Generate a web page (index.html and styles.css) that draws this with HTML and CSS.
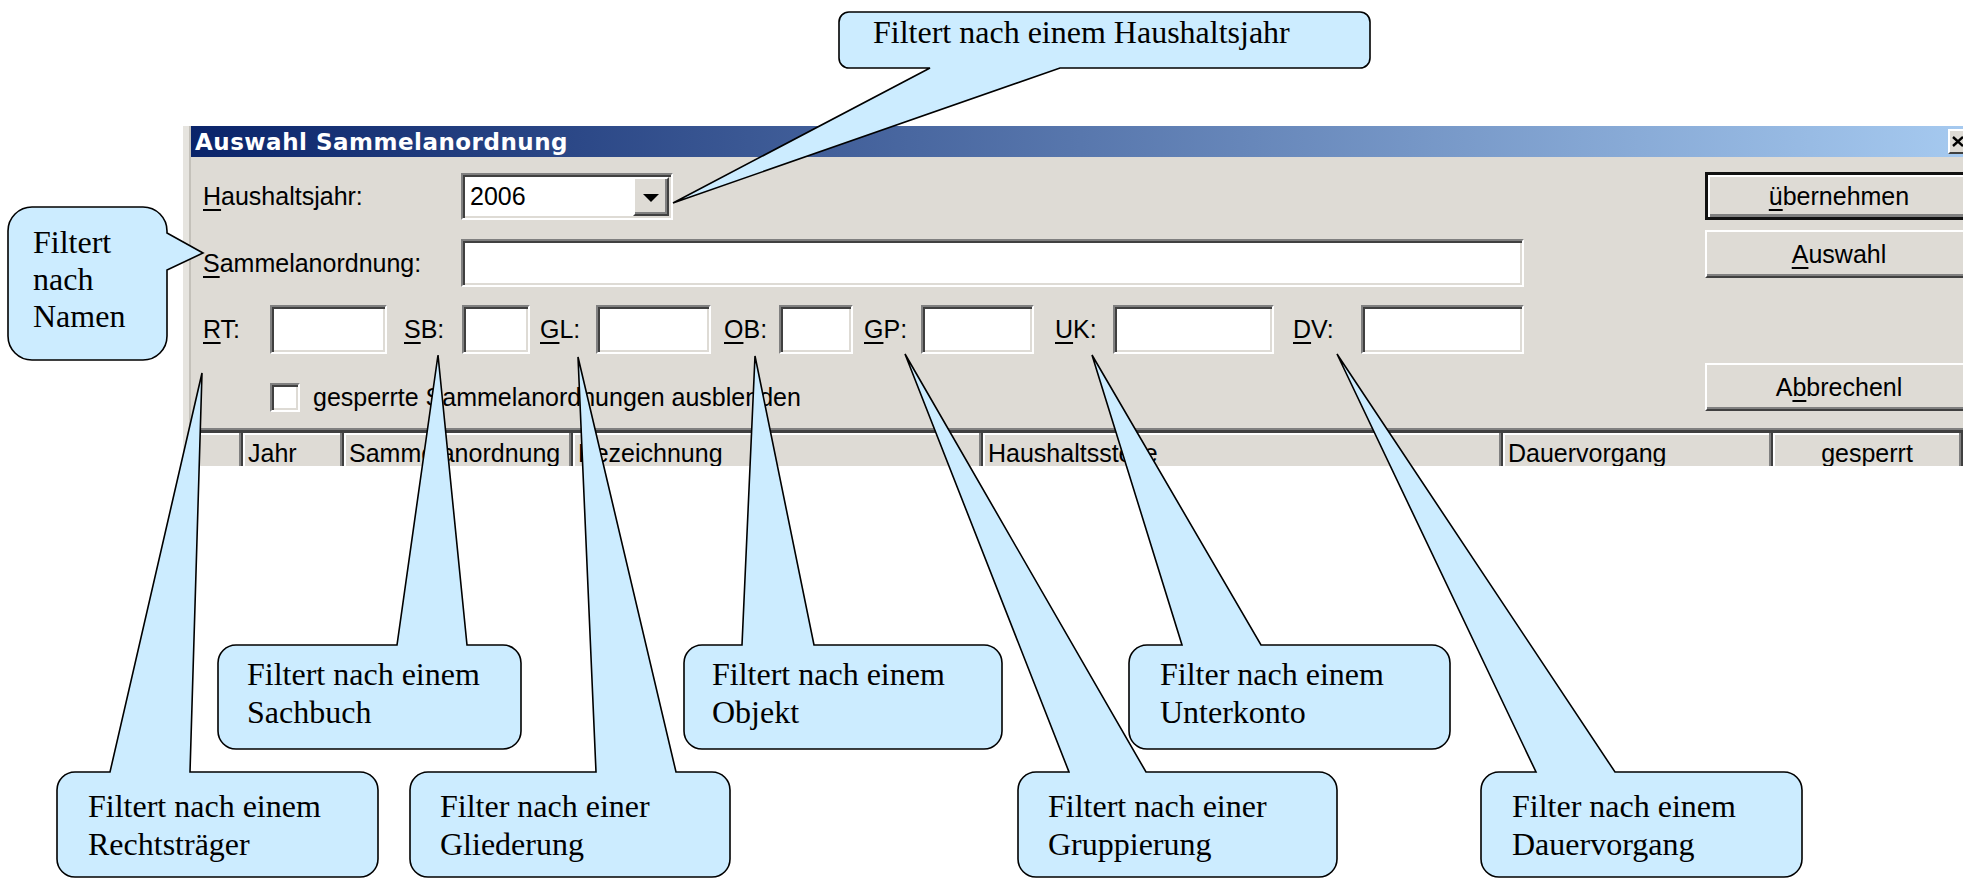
FILE: index.html
```html
<!DOCTYPE html>
<html lang="de">
<head>
    <meta charset="UTF-8">
    <title>Auswahl Sammelanordnung</title>
    <link rel="stylesheet" href="styles.css">
</head>
<body>

<div class="page">

    <div class="window">
        <div class="titlebar">
            <span class="title">Auswahl Sammelanordnung</span>
            <span class="close">
                <svg width="12" height="11" viewBox="0 0 12 11"><path d="M1 1L11 10M11 1L1 10" stroke="#000" stroke-width="2.4"/></svg>
            </span>
        </div>

        <div class="content">
            <div class="form">
                <div class="row row-year">
                    <label class="lbl lbl-wide"><u>H</u>aushaltsjahr:</label>
                    <div class="sunken combo">
                        <span class="combo-value">2006</span>
                        <span class="raised combo-btn"><span class="arrow"></span></span>
                    </div>
                </div>

                <div class="row row-name">
                    <label class="lbl lbl-wide"><u>S</u>ammelanordnung:</label>
                    <div class="sunken field-name"></div>
                </div>

                <div class="row row-filters">
                    <label class="lbl lbl-rt"><u>R</u>T:</label><div class="sunken in-rt"></div>
                    <label class="lbl lbl-sb"><u>S</u>B:</label><div class="sunken in-sb"></div>
                    <label class="lbl lbl-gl"><u>G</u>L:</label><div class="sunken in-gl"></div>
                    <label class="lbl lbl-ob"><u>O</u>B:</label><div class="sunken in-ob"></div>
                    <label class="lbl lbl-gp"><u>G</u>P:</label><div class="sunken in-gp"></div>
                    <label class="lbl lbl-uk"><u>U</u>K:</label><div class="sunken in-uk"></div>
                    <label class="lbl lbl-dv"><u>D</u>V:</label><div class="sunken in-dv"></div>
                </div>

                <div class="row row-check">
                    <span class="sunken checkbox"></span>
                    <span class="check-label">gesperrte Sammelanordnungen ausblenden</span>
                </div>
            </div>

            <div class="buttons">
                <button class="btn btn-default"><u>ü</u>bernehmen</button>
                <button class="btn btn-select"><u>A</u>uswahl</button>
                <button class="btn btn-cancel">A<u>b</u>brechenl</button>
            </div>
        </div>

        <div class="list">
            <div class="list-head">
                <div class="col"></div>
                <div class="col">Jahr</div>
                <div class="col">Sammelanordnung</div>
                <div class="col">Bezeichnung</div>
                <div class="col">Haushaltsstelle</div>
                <div class="col">Dauervorgang</div>
                <div class="col col-center">gesperrt</div>
                <div class="col"></div>
            </div>
        </div>
    </div>

    <!-- callouts drawn over the dialog -->
    <svg class="callouts" width="1963" height="879" viewBox="0 0 1963 879">
        <path class="callout" d="M849,12 H1360 A10,10 0 0 1 1370,22 V58 A10,10 0 0 1 1360,68 H1060 L673,203 L930,68 H849 A10,10 0 0 1 839,58 V22 A10,10 0 0 1 849,12 Z"/>
        <text class="callout-text" x="873" y="43">Filtert nach einem Haushaltsjahr</text>

        <path class="callout" d="M32,207 H143 A24,24 0 0 1 167,231 V233 L203,253 L167,270 V336 A24,24 0 0 1 143,360 H32 A24,24 0 0 1 8,336 V231 A24,24 0 0 1 32,207 Z"/>
        <text class="callout-text" x="33" y="253">Filtert</text>
        <text class="callout-text" x="33" y="290">nach</text>
        <text class="callout-text" x="33" y="327">Namen</text>

        <path class="callout" d="M236,645 H397 L438,355 L467,645 H503 A18,18 0 0 1 521,663 V731 A18,18 0 0 1 503,749 H236 A18,18 0 0 1 218,731 V663 A18,18 0 0 1 236,645 Z"/>
        <text class="callout-text" x="247" y="685">Filtert nach einem</text>
        <text class="callout-text" x="247" y="723">Sachbuch</text>

        <path class="callout" d="M702,645 H742 L755,356 L814,645 H984 A18,18 0 0 1 1002,663 V731 A18,18 0 0 1 984,749 H702 A18,18 0 0 1 684,731 V663 A18,18 0 0 1 702,645 Z"/>
        <text class="callout-text" x="712" y="685">Filtert nach einem</text>
        <text class="callout-text" x="712" y="723">Objekt</text>

        <path class="callout" d="M1147,645 H1182 L1092,355 L1261,645 H1432 A18,18 0 0 1 1450,663 V731 A18,18 0 0 1 1432,749 H1147 A18,18 0 0 1 1129,731 V663 A18,18 0 0 1 1147,645 Z"/>
        <text class="callout-text" x="1160" y="685">Filter nach einem</text>
        <text class="callout-text" x="1160" y="723">Unterkonto</text>

        <path class="callout" d="M75,772 H110 L202,373 L190,772 H360 A18,18 0 0 1 378,790 V859 A18,18 0 0 1 360,877 H75 A18,18 0 0 1 57,859 V790 A18,18 0 0 1 75,772 Z"/>
        <text class="callout-text" x="88" y="817">Filtert nach einem</text>
        <text class="callout-text" x="88" y="855">Rechtsträger</text>

        <path class="callout" d="M428,772 H596 L578,357 L676,772 H712 A18,18 0 0 1 730,790 V859 A18,18 0 0 1 712,877 H428 A18,18 0 0 1 410,859 V790 A18,18 0 0 1 428,772 Z"/>
        <text class="callout-text" x="440" y="817">Filter nach einer</text>
        <text class="callout-text" x="440" y="855">Gliederung</text>

        <path class="callout" d="M1036,772 H1069 L905,354 L1146,772 H1319 A18,18 0 0 1 1337,790 V859 A18,18 0 0 1 1319,877 H1036 A18,18 0 0 1 1018,859 V790 A18,18 0 0 1 1036,772 Z"/>
        <text class="callout-text" x="1048" y="817">Filtert nach einer</text>
        <text class="callout-text" x="1048" y="855">Gruppierung</text>

        <path class="callout" d="M1499,772 H1536 L1337,354 L1615,772 H1784 A18,18 0 0 1 1802,790 V859 A18,18 0 0 1 1784,877 H1499 A18,18 0 0 1 1481,859 V790 A18,18 0 0 1 1499,772 Z"/>
        <text class="callout-text" x="1512" y="817">Filter nach einem</text>
        <text class="callout-text" x="1512" y="855">Dauervorgang</text>
    </svg>

</div>

</body>
</html>
```

FILE: styles.css
```css
body {
    margin: 0;
    background-color: #fff;
    font-family: "Liberation Sans", Arial, sans-serif;
}
.page {
    position: relative;
    width: 1963px;
    height: 879px;
    overflow: hidden;
    padding-top: 126px;
    box-sizing: border-box;
}

/* dialog window */
.window {
    width: 1779px;
    height: 340px;
    margin-left: 183px;
    border-left: 6px solid #e6e4df;
    padding-left: 2px;
    box-shadow: inset 2px 0 0 #c4c1ba;
    background-color: #dedbd5;
    overflow: hidden;
    font-size: 25px;
    color: #000;
}
.titlebar {
    display: flex;
    align-items: center;
    height: 31px;
    padding: 0 2px 0 4px;
    background: linear-gradient(to right, #0a246a, #a6caf0);
}
.title {
    font: bold 23px "DejaVu Sans", sans-serif;
    letter-spacing: 0.5px;
    color: #fff;
    white-space: nowrap;
}
.close {
    margin-left: auto;
    width: 20px;
    height: 25px;
    box-sizing: border-box;
    display: flex;
    align-items: center;
    justify-content: center;
    background-color: #dedbd5;
    border: 2px solid;
    border-color: #fff #404040 #404040 #fff;
}

u {
    text-decoration: underline;
    text-decoration-thickness: 2px;
    text-underline-offset: 4px;
}

/* 3D borders */
.sunken {
    box-sizing: border-box;
    background-color: #fff;
    border: 2px solid;
    border-color: #808080 #fff #fff #808080;
    box-shadow: inset 2px 2px 0 #404040, inset -2px -2px 0 #dedbd5;
    flex-shrink: 0;
}
.raised {
    box-sizing: border-box;
    background-color: #dedbd5;
    border: 2px solid;
    border-color: #fff #404040 #404040 #fff;
    box-shadow: inset -2px -2px 0 #808080;
}

.content {
    display: flex;
    height: 271px;
}
.form {
    flex-shrink: 0;
    width: 1502px;
    padding: 16px 0 0 12px;
}
.row {
    display: flex;
    align-items: center;
}
.row-year {
    height: 47px;
}
.row-name {
    height: 48px;
    margin-top: 19px;
}
.row-filters {
    height: 49px;
    margin-top: 18px;
}
.row-check {
    height: 29px;
    margin-top: 29px;
}
.lbl {
    flex-shrink: 0;
    white-space: nowrap;
}
.lbl-wide {
    width: 258px;
}

.combo {
    display: flex;
    align-items: center;
    width: 212px;
    height: 47px;
    padding: 2px;
}
.combo-value {
    flex: 1;
    padding-left: 5px;
}
.combo-btn {
    display: flex;
    align-items: center;
    justify-content: center;
    width: 36px;
    height: 100%;
}
.arrow {
    border-left: 8px solid transparent;
    border-right: 8px solid transparent;
    border-top: 8px solid #000;
    margin-top: 2px;
}
.field-name {
    width: 1063px;
    height: 48px;
}

/* filter row */
.row-filters .sunken {
    height: 49px;
}
.lbl-rt { width: 67px; }
.lbl-sb { width: 58px; margin-left: 17px; }
.lbl-gl { width: 56px; margin-left: 10px; }
.lbl-ob { width: 55px; margin-left: 13px; }
.lbl-gp { width: 57px; margin-left: 11px; }
.lbl-uk { width: 58px; margin-left: 21px; }
.lbl-dv { width: 68px; margin-left: 19px; }
.in-rt { width: 117px; }
.in-sb { width: 68px; }
.in-gl { width: 115px; }
.in-ob { width: 74px; }
.in-gp { width: 113px; }
.in-uk { width: 161px; }
.in-dv { width: 163px; }

.checkbox {
    width: 30px;
    height: 29px;
    margin-left: 67px;
}
.check-label {
    margin-left: 13px;
    white-space: nowrap;
}

/* buttons on the right */
.buttons {
    flex-shrink: 0;
    width: 268px;
    padding-top: 15px;
}
.btn {
    display: flex;
    align-items: center;
    justify-content: center;
    width: 268px;
    height: 48px;
    box-sizing: border-box;
    padding: 0;
    font: 25px "Liberation Sans", Arial, sans-serif;
    color: #000;
    background-color: #dedbd5;
    border: 2px solid;
    border-color: #fff #404040 #404040 #fff;
    box-shadow: inset -2px -2px 0 #808080;
}
.btn-default {
    border: 3px solid #111;
    box-shadow: inset 2px 2px 0 #fff, inset -3px -3px 0 #808080;
}
.btn-select {
    margin-top: 10px;
}
.btn-cancel {
    margin-top: 85px;
}

/* list header */
.list {
    border-top: 2px solid #808080;
    border-left: 2px solid #808080;
}
.list-head {
    display: grid;
    grid-template-columns: 48px 101px 229px 410px 520px 270px 190px 1fr;
    height: 40px;
    border-top: 3px solid #404040;
    border-left: 2px solid #404040;
}
.col {
    box-sizing: border-box;
    padding: 3px 0 0 5px;
    line-height: 35px;
    white-space: nowrap;
    overflow: hidden;
    border-right: 2px solid #404040;
    box-shadow: inset -2px 0 0 #808080, inset 2px 2px 0 #fff;
}
.col-center {
    padding-left: 0;
    text-align: center;
}

/* callouts */
.callouts {
    position: absolute;
    left: 0;
    top: 0;
}
.callout {
    fill: #ccecff;
    stroke: #000;
    stroke-width: 1.6;
}
.callout-text {
    font-family: "Liberation Serif", "Times New Roman", serif;
    font-size: 32px;
    fill: #000;
}
```
